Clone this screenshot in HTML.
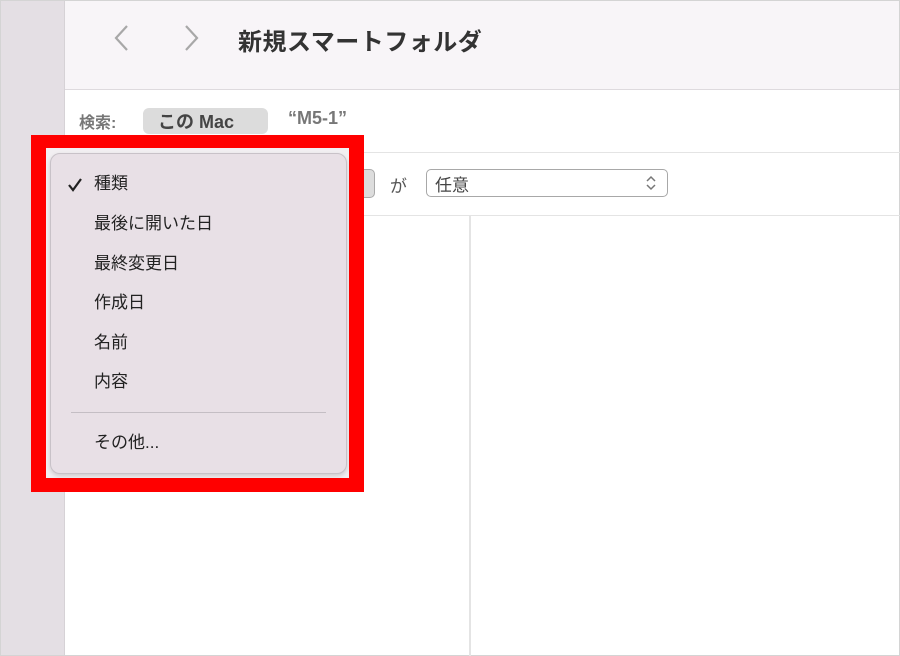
<!DOCTYPE html>
<html><head><meta charset="utf-8"><style>
body{margin:0;width:900px;height:656px;position:relative;overflow:hidden;background:#fff;font-family:"Liberation Sans","Noto Sans CJK JP",sans-serif}
.a{position:absolute}
.m{position:absolute;font-size:17px;color:#222;line-height:24px}
</style></head><body>
<div class="a" style="left:0;top:0;width:898px;height:654px;border:1px solid #d4d4d4"></div>
<div class="a" style="left:1px;top:1px;width:63px;height:654px;background:#e4dfe4;border-right:1px solid #d6d2d6"></div>
<div class="a" style="left:65px;top:1px;width:834px;height:88px;background:#f8f5f8;border-bottom:1px solid #dedade"></div>
<svg class="a" style="left:105px;top:22px" width="100" height="32"><path d="M22 4 L11 16 L22 28" fill="none" stroke="#a8a8a8" stroke-width="2.2"/><path d="M81 4 L92 16 L81 28" fill="none" stroke="#a8a8a8" stroke-width="2.2"/></svg>
<div class="a" style="left:238px;top:22px;font-size:24px;color:#333;font-weight:bold;letter-spacing:0.5px">新規スマートフォルダ</div>
<div class="a" style="left:79px;top:109px;font-size:16px;color:#777;font-weight:bold">検索:</div>
<div class="a" style="left:143px;top:108px;width:125px;height:26px;background:#dcdcdc;border-radius:6px"></div>
<div class="a" style="left:158px;top:108px;font-size:18px;color:#444;font-weight:bold">この Mac</div>
<div class="a" style="left:288px;top:108px;font-size:18px;color:#777;font-weight:bold">“M5-1”</div>
<div class="a" style="left:65px;top:152px;width:835px;height:1px;background:#e4e4e4"></div>
<div class="a" style="left:65px;top:215px;width:835px;height:1px;background:#e4e4e4"></div>
<div class="a" style="left:469px;top:216px;width:2px;height:440px;background:#e4e4e4"></div>
<div class="a" style="left:340px;top:169px;width:33px;height:27px;background:#ddd;border:1px solid #aaa;border-radius:5px"></div>
<div class="a" style="left:390px;top:172px;font-size:17px;color:#555">が</div>
<div class="a" style="left:426px;top:169px;width:240px;height:26px;border:1px solid #a8a8a8;border-radius:5px;background:#fff"></div>
<div class="a" style="left:435px;top:171px;font-size:17px;color:#444">任意</div>
<svg class="a" style="left:645px;top:174px" width="12" height="18"><path d="M2 7 L6 3 L10 7 M2 11 L6 15 L10 11" fill="none" stroke="#777" stroke-width="1.5"/></svg>
<div class="a" style="left:31px;top:135px;width:303px;height:330px;border:15px solid #f00;border-top-width:13px;border-bottom-width:14px"></div>
<div class="a" style="left:46px;top:148px;width:303px;height:330px;background:#f2eff2"></div>
<div class="a" style="left:50px;top:153px;width:295px;height:319px;background:#e8e0e6;border:1px solid #c8c2c8;border-radius:10px;box-shadow:0 2px 4px rgba(0,0,0,.15)"></div>
<svg class="a" style="left:67px;top:177px" width="16" height="16"><path d="M2 8 L6 13 L14 2" fill="none" stroke="#222" stroke-width="2.2"/></svg>
<div class="m" style="left:94px;top:172px">種類</div>
<div class="m" style="left:94px;top:212px">最後に開いた日</div>
<div class="m" style="left:94px;top:252px">最終変更日</div>
<div class="m" style="left:94px;top:291px">作成日</div>
<div class="m" style="left:94px;top:331px">名前</div>
<div class="m" style="left:94px;top:370px">内容</div>
<div class="a" style="left:71px;top:412px;width:255px;height:1px;background:#c4bec4"></div>
<div class="m" style="left:94px;top:431px">その他...</div>
</body></html>
